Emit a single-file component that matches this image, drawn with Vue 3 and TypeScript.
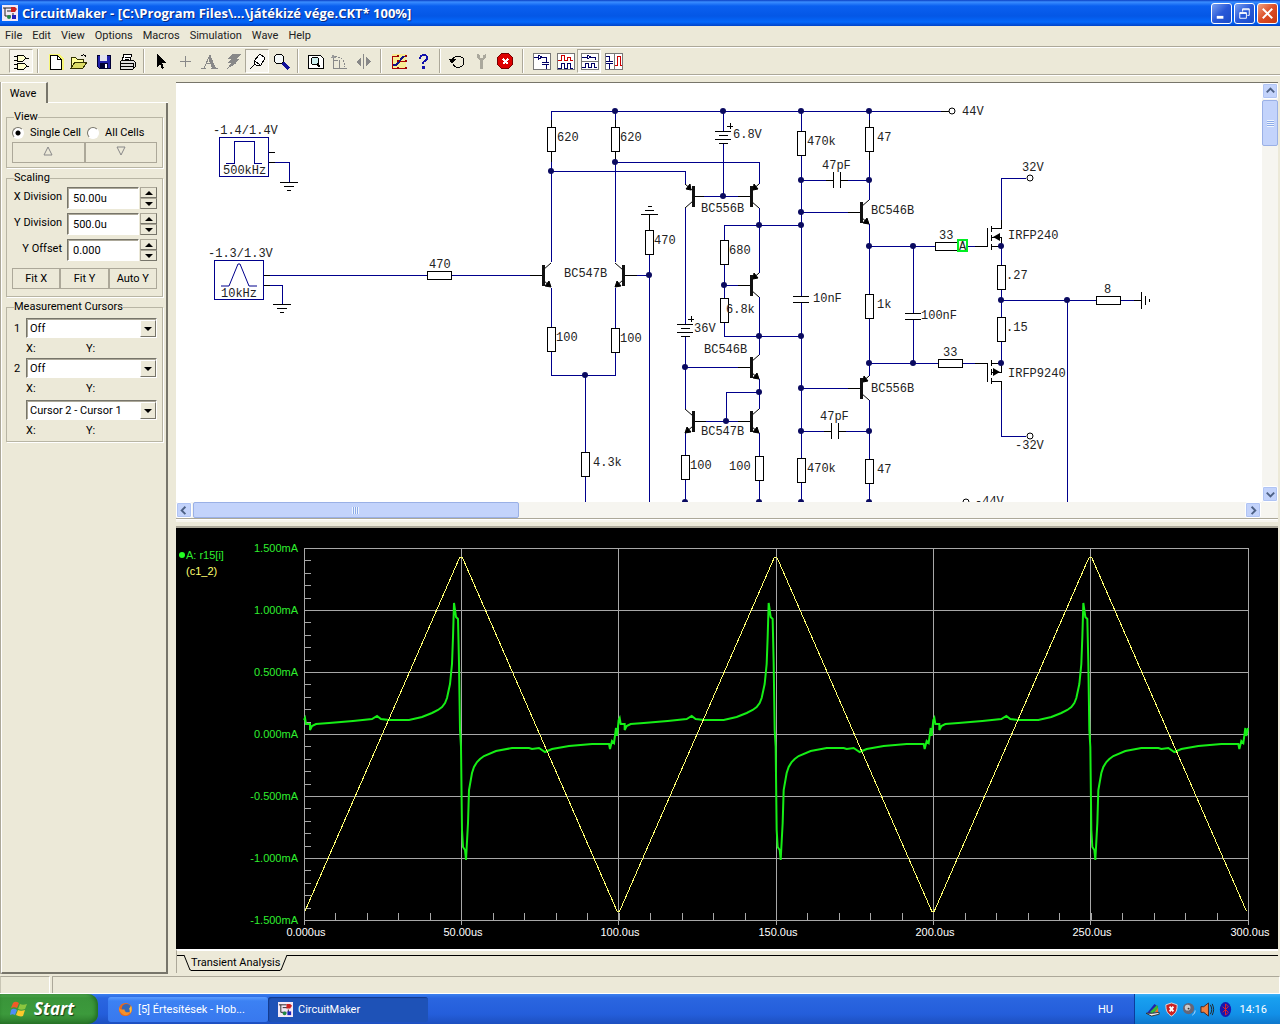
<script setup lang="ts">
import { ref } from 'vue'

type Point = [number, number]

const menus = ['File', 'Edit', 'View', 'Options', 'Macros', 'Simulation', 'Wave', 'Help']

const cellMode = ref('single')
const xDivision = ref('50.00u')
const yDivision = ref('500.0u')
const yOffset = ref('0.000')
const cursor1 = ref('Off')
const cursor2 = ref('Off')
const cursorDiff = ref('Cursor 2 - Cursor 1')

/* Schematic wires, each an SVG path */
const wires: string[] = [
  'M551 127V111H949', 'M615 111V127', 'M723 111V131', 'M801 111V131', 'M869 111V127',
  'M551 151V262', 'M615 151V262', 'M551 171H685V184', 'M615 162H759V184', 'M723 143V196',
  'M264 275H427', 'M451 275H543', 'M269 162H289V182', 'M264 285H282V304',
  'M551 288V327', 'M615 288V328', 'M551 351V375H615V352', 'M585 375V452', 'M585 476V502',
  'M624 275H649', 'M649 254V502', 'M694 196H751', 'M685 208V324', 'M685 336V409',
  'M759 208V273', 'M724 240V225H801', 'M724 264V298', 'M724 285H751', 'M724 322V336H801',
  'M759 297V355', 'M685 367H751', 'M759 379V409', 'M759 392H726V421', 'M694 421H751',
  'M685 433V455', 'M759 433V456', 'M685 479V502', 'M759 480V502',
  'M801 155V296', 'M801 302V458', 'M801 482V502', 'M801 180H833', 'M840 180H869',
  'M801 212H861', 'M869 151V200', 'M869 224V294', 'M869 318V376', 'M869 400V459', 'M869 483V502',
  'M869 246H935', 'M913 246V313', 'M913 319V363', 'M869 363H938', 'M962 363H987',
  'M801 388H861', 'M801 431H831', 'M838 431H869', 'M967 246H987',
  'M1001 228V178H1026', 'M1001 246V265', 'M1001 289V317', 'M1001 341V363', 'M1001 300H1096',
  'M1067 300V502', 'M1120 300H1141', 'M1001 381V436H1026'
]

const leads: string[] = [
  'M615 120V127M551 120V127M551 151V162M615 151V160M869 120V127M869 151V160',
  'M649 214V230M269 152H275M269 162H275M264 275H270M264 285H270',
  'M530 275H543M624 275H637M694 196H704M738 196H751M738 285H751M738 367H751M738 421H751M694 421H706',
  'M848 212H861M848 388H861M826 180H833M840 180H848M824 431H831M838 431H846M975 246H987M975 363H987',
  'M280 182H298M284 186H294M287 190H291M273 304H291M277 308H287M280 312H284',
  'M641 214H658M645 210H654M648 206H652',
  'M715 131H731M719 135H728M715 139H731M719 143H728M727 126H733M730 123V129',
  'M677 324H693M681 328H690M677 332H693M681 336H690M688 319H694M691 316V322',
  'M793 296H809M793 302H809M905 313H921M905 319H921M833 172V188M840 172V188M831 423V439M838 423V439',
  'M1141 292V309M1145 296V305M1149 299V302M1134 300H1141',
  'M987 228V247M991 226V232M991 235V241M991 244V250M991 228H1001V220M991 246H1001V237H992',
  'M987 363V382M991 360V366M991 369V375M991 378V384M991 363H1001V372H991M991 381H1001V390',
  'M941 111H949'
]

const vResistors: Point[] = [
  [551, 127], [615, 127], [801, 131], [869, 127], [649, 230], [724, 240], [724, 298],
  [551, 327], [615, 328], [585, 452], [685, 455], [759, 456], [801, 458], [869, 294],
  [869, 459], [1001, 265], [1001, 317]
]
const hResistors: Point[] = [[427, 275], [935, 246], [938, 363], [1096, 300]]

const nodes: Point[] = [
  [615, 111], [723, 111], [801, 111], [869, 111], [551, 171], [615, 162], [723, 196],
  [649, 275], [585, 375], [759, 225], [801, 225], [724, 285], [759, 336], [801, 336],
  [685, 367], [759, 392], [726, 421], [801, 180], [801, 212], [869, 180], [869, 246],
  [913, 246], [869, 363], [913, 363], [801, 388], [801, 431], [869, 431], [1001, 246],
  [1001, 300], [1001, 363], [1067, 300], [685, 502], [759, 502], [801, 502], [869, 502]
]
const terminals: Point[] = [[952, 111], [1030, 178], [1030, 436], [966, 502]]

interface Transistor { x: number; y: number; dir: 1 | -1; pnp: boolean }
const transistors: Transistor[] = [
  { x: 551, y: 275, dir: 1, pnp: false }, { x: 615, y: 275, dir: -1, pnp: false },
  { x: 685, y: 196, dir: -1, pnp: true }, { x: 759, y: 196, dir: 1, pnp: true },
  { x: 759, y: 285, dir: 1, pnp: true }, { x: 759, y: 367, dir: 1, pnp: false },
  { x: 685, y: 421, dir: -1, pnp: false }, { x: 759, y: 421, dir: 1, pnp: false },
  { x: 869, y: 212, dir: 1, pnp: false }, { x: 869, y: 388, dir: 1, pnp: true }
]
const barX = (t: Transistor) => t.x - 8 * t.dir
const legs = (t: Transistor) =>
  `M${barX(t)} ${t.y - 5}L${t.x} ${t.y - 12}M${barX(t)} ${t.y + 5}L${t.x} ${t.y + 12}`
const arrow = (t: Transistor) => {
  const d = t.dir
  return t.pnp
    ? `M${t.x - 6 * d} ${t.y - 6}l${5 * d} -1l${-4 * d} -5z`
    : `M${t.x} ${t.y + 12}l${-6 * d} -1l${4 * d} -5z`
}

const labels: [number, number, string][] = [
  [213, 134, '-1.4/1.4V'], [223, 174, '500kHz'], [208, 257, '-1.3/1.3V'], [221, 297, '10kHz'],
  [429, 268, '470'], [557, 141, '620'], [620, 141, '620'], [733, 138, '6.8V'], [807, 145, '470k'],
  [877, 141, '47'], [822, 169, '47pF'], [962, 115, '44V'], [701, 212, 'BC556B'], [654, 244, '470'],
  [729, 254, '680'], [726, 313, '6.8k'], [871, 214, 'BC546B'], [939, 239, '33'], [1008, 239, 'IRFP240'],
  [1006, 279, '.27'], [1104, 293, '8'], [1022, 171, '32V'], [813, 302, '10nF'], [877, 308, '1k'],
  [921, 319, '100nF'], [1006, 331, '.15'], [943, 356, '33'], [1008, 377, 'IRFP9240'],
  [871, 392, 'BC556B'], [820, 420, '47pF'], [807, 472, '470k'], [877, 473, '47'],
  [1015, 449, '-32V'], [564, 277, 'BC547B'], [556, 341, '100'], [620, 342, '100'],
  [694, 332, '36V'], [704, 353, 'BC546B'], [701, 435, 'BC547B'], [690, 469, '100'],
  [729, 470, '100'], [593, 466, '4.3k'], [975, 505, '-44V']
]

/* Scope plot */
const left = 304
const top = 548
const width = 944
const height = 372
const yLabels = ['1.500mA', '1.000mA', '0.500mA', '0.000mA', '-0.500mA', '-1.000mA', '-1.500mA']
const xLabels = ['0.000us', '50.00us', '100.0us', '150.0us', '200.0us', '250.0us', '300.0us']
const gridX = (i: number) => left + Math.floor((width / 6) * i)
const gridY = (i: number) => top + 62 * i

const minor = Array.from({ length: 31 }, (_, i) => {
  const y = Math.round(top + 12.4 * i)
  const x = Math.round(left + (width / 30) * i)
  return `M${left} ${y}h7M${x} ${top + height}v-7`
}).join('')

const period = width / 3
const cycle: Point[] = [
  [0, 720], [1, 718], [2, 724], [6, 724], [6, 730], [8, 726], [12, 724], [25, 723], [49, 721],
  [68, 719], [73, 716], [77, 719], [85, 720], [105, 720], [118, 717], [128, 713], [134, 710], [138, 707],
  [141, 703], [143, 698], [146, 684], [148, 664], [149, 637], [150, 603], [152, 617], [154, 619], [155, 663],
  [156, 730], [157, 747], [158, 830], [159, 847], [161, 850], [162, 860], [164, 823], [165, 790],
  [168, 773], [170, 767], [173, 762], [176, 759], [180, 756], [192, 751], [208, 748], [225, 748], [228, 749], [235, 748],
  [241, 752], [248, 749], [265, 746], [288, 744], [305, 744], [306, 749], [308, 741], [310, 743],
  [312, 728], [313, 736]
]
const currentTrace = [0, 1, 2]
  .flatMap(k => cycle.map(([x, y]) => `${left + k * period + x},${y}`))
  .concat(`${left + width},728`)
  .join(' ')
const inputTrace = [0, 1, 2]
  .flatMap(k => {
    const s = left + k * period
    return [`${s + 1},911`, `${s + 155},559`, `${s + 156},557`, `${s + 158},557`, `${s + 159},559`, `${s + 313},911`]
  })
  .join(' ')

interface Tool { name: string; art: string; pressed?: boolean }
const toolGroups: { wide?: boolean; tools: Tool[] }[] = [
  { tools: [{ name: 'Parts', pressed: true, art: '<path d="M6 4h6l3 3-3 3H6zM6 12h7l3 3-3 3H6z" fill="#ffc" stroke="#000"/><path d="M3 5h3M3 9h3M15 7h3M3 13h3M3 17h3M16 15h2" stroke="#000"/>' }] },
  { tools: [
    { name: 'New', art: '<path d="M4 3h11l4 5v11H4z" fill="#ff3" opacity=".6"/><path d="M5 4h7l4 4v10H5z" fill="#fff" stroke="#000"/><path d="M12 4v4h4" stroke="#000"/>' },
    { name: 'Open', art: '<path d="M2 17V6h4l2 2h6v3" fill="#ff9" stroke="#330"/><path d="M2 17l4-6h12l-4 6z" fill="#dd6" stroke="#330"/><path d="M12 5c2-2 4-1 5 1" stroke="#000"/>' },
    { name: 'Save', art: '<path d="M4 4h13v13H6l-2-2z" fill="#22a" stroke="#003"/><path d="M7 4h7v6H7z" fill="#e4e4ee"/><path d="M7 12h8v5H7z" fill="#003"/><path d="M12 13h2v4h-2z" fill="#fff"/>' },
    { name: 'Print', art: '<path d="M5 10l2-7h8l-2 7" fill="#fff" stroke="#000"/><path d="M8 6h5M8 8h4" stroke="#000"/><path d="M3 11l2-2h11l2 2v5l-2 2H3z" fill="#ddd" stroke="#000"/><path d="M3 12h13v6M3 15h13" stroke="#000"/>' }
  ] },
  { tools: [
    { name: 'Select', art: '<path d="M6 3v13l3-3 2 5 2-1-2-5h4z" fill="#000"/>' },
    { name: 'Wire', art: '<path d="M10 5v11M5 10h11" stroke="#888"/>' },
    { name: 'Text', art: '<path d="M2 17h5M12 17h7M5 17L11 4l5 13M7 12h7" stroke="#888"/><path d="M11 4l6 13h-4L9 7z" fill="#888"/>' },
    { name: 'Delete', art: '<path d="M9 3h9l-4 5h3l-5 4h2L4 18l4-6H5l3-4H5z" fill="#888"/>' },
    { name: 'Probe', pressed: true, art: '<path d="M3 18l5-5-1-3 6-7 5 4-4 7-4 1-2-2" fill="#fff" stroke="#000"/><path d="M8 10l5 4" stroke="#000"/>' },
    { name: 'Zoom', art: '<circle cx="8" cy="8" r="5" fill="#f4f8f8" stroke="#000"/><path d="M12 12l6 6" stroke="#119" stroke-width="3"/>' }
  ] },
  { tools: [
    { name: 'Fit', art: '<path d="M3 4h12l3 3v10H3z" fill="#fff" stroke="#000"/><circle cx="10" cy="10" r="4" fill="#cee" stroke="#000"/><path d="M12 13l3 3" stroke="#000" stroke-width="2"/>' },
    { name: 'Rotate', art: '<path d="M4 4v13h14M4 9h5M10 9v8" stroke="#888"/><path d="M6 6c6-1 10 3 10 10" stroke="#888" stroke-dasharray="2 1"/><path d="M2 7l2-4 3 4z" fill="#999"/>' },
    { name: 'Mirror', art: '<path d="M10 3v15" stroke="#888"/><path d="M8 6v9l-5-4zM13 6v9l5-4z" fill="#888"/>' }
  ] },
  { wide: true, tools: [
    { name: 'Options', art: '<path d="M3 3h14v15H3z" fill="#fe6" opacity=".6"/><path d="M8 5H3v12h14M9 10h8M13 5h5" stroke="#a00"/><path d="M4 14h3l8-9" stroke="#118" stroke-width="2"/><path d="M8 4h2v2H8zM16 4h2v2h-2zM8 9h2v2H8zM16 9h2v2h-2zM8 16h2v2H8zM16 16h2v2h-2z" fill="#900"/>' },
    { name: 'Help', art: '<path d="M7 8c0-5 8-5 7-1 0 3-4 2-4 6" stroke="#11a" stroke-width="2"/><path d="M9 15h3v3H9z" fill="#11a"/>' }
  ] },
  { tools: [
    { name: 'Reset', art: '<path d="M5 9c3-6 13-4 12 2 0 6-9 7-11 2" stroke="#000"/><path d="M2 8h7l-4 5z" fill="#000"/>' },
    { name: 'Setup', art: '<path d="M6 3v4l3 2v9h3V9l3-2V3l-3 1v3H9V4z" fill="#aaa89c"/>' },
    { name: 'Stop', art: '<circle cx="10" cy="10" r="8" fill="#d00" stroke="#700"/><path d="M8 8l5 5M13 8l-5 5" stroke="#fff" stroke-width="2"/>' }
  ] },
  { wide: true, tools: [
    { name: 'Schematic view', art: '<path d="M2 2h17v16H2z" fill="#fff" stroke="#777"/><path d="M3 6h4M7 4v5l4-3zM11 6h4v5M11 11h7M11 13h7M15 13v5" stroke="#006"/>' },
    { name: 'Digital waves', art: '<path d="M2 2h17v16H2z" fill="#fff" stroke="#777"/><path d="M3 9h3V4h3v5h3V6h3v3h3" stroke="#c00"/><path d="M3 17h3v-5h3v5h3v-5h3v5h3" stroke="#006"/>' },
    { name: 'Schematic and waves', pressed: true, art: '<path d="M2 2h17v16H2zM2 10h17" fill="#fff" stroke="#777"/><path d="M3 6h5M8 4v4l4-2zM12 6h4v3M3 16h3v-4h3v4h3v-4h3v4h3" stroke="#006"/>' },
    { name: 'Side by side', art: '<path d="M2 2h17v16H2zM11 2v16" fill="#fff" stroke="#777"/><path d="M3 5h3v5M3 10h7M3 12h7M6 12v6" stroke="#006"/><path d="M12 14h2V5h3v9h2" stroke="#c00"/>' }
  ] }
]

const appArt = '<path d="M0 0h16v16H0z" fill="#f3e8f6"/><path d="M1 3h8M3 3v8h6M5 6h5M11 8v3" stroke="#222" fill="none"/><path d="M9 2h4l2 2-2 3H9z" fill="#c22"/><circle cx="7" cy="12" r="2" fill="#284"/><path d="M10 10h4v4h-4z" fill="#22b"/>'
</script>

<template>
  <div class="window">
    <header class="title">
      <svg class="app-icon" viewBox="0 0 16 16" v-html="appArt"></svg>
      <h1>CircuitMaker - [C:\Program Files\...\játékizé vége.CKT* 100%]</h1>
      <button class="win-btn" aria-label="Minimize"><svg viewBox="0 0 20 20"><path d="M5 14h7" stroke="#fff" stroke-width="3" /></svg></button>
      <button class="win-btn" aria-label="Restore"><svg viewBox="0 0 20 20" fill="none" stroke="#fff"><path d="M5 9h7v6H5zM5 10h7M8 8V5h7v7h-2M8 6h7" /></svg></button>
      <button class="win-btn close" aria-label="Close"><svg viewBox="0 0 20 20"><path d="M5 5l10 10M15 5L5 15" stroke="#fff" stroke-width="2" /></svg></button>
    </header>

    <nav class="menu">
      <button v-for="m in menus" :key="m">{{ m }}</button>
    </nav>

    <div class="toolbar">
      <template v-for="(g, i) in toolGroups" :key="i">
        <span v-if="i" class="sep" :class="{ wide: g.wide }"></span>
        <button v-for="t in g.tools" :key="t.name" :class="{ pressed: t.pressed }" :aria-label="t.name">
          <svg viewBox="0 0 21 21" v-html="t.art"></svg>
        </button>
      </template>
    </div>

    <main class="work">
      <aside class="side">
        <div class="side-tab"><button>Wave</button></div>
        <div class="side-body">
          <fieldset class="view-box">
            <legend>View</legend>
            <div class="radios">
              <label><input v-model="cellMode" type="radio" value="single">Single Cell</label>
              <label><input v-model="cellMode" type="radio" value="all">All Cells</label>
            </div>
            <div class="btn-row">
              <button aria-label="Previous cell"><svg width="12" height="10" viewBox="0 0 12 10"><path d="M6 1l4 8H2z" fill="none" stroke="#888" /></svg></button>
              <button aria-label="Next cell"><svg width="12" height="10" viewBox="0 0 12 10"><path d="M6 9l4-8H2z" fill="none" stroke="#888" /></svg></button>
            </div>
          </fieldset>

          <fieldset class="scale-box">
            <legend>Scaling</legend>
            <div class="field">
              <label for="xdiv">X Division</label><input id="xdiv" v-model="xDivision" type="text">
              <span class="spin"><button aria-label="X up"><i class="up"></i></button><button aria-label="X down"><i class="down"></i></button></span>
            </div>
            <div class="field">
              <label for="ydiv">Y Division</label><input id="ydiv" v-model="yDivision" type="text">
              <span class="spin"><button aria-label="Y up"><i class="up"></i></button><button aria-label="Y down"><i class="down"></i></button></span>
            </div>
            <div class="field">
              <label for="yoff">Y Offset</label><input id="yoff" v-model="yOffset" type="text">
              <span class="spin"><button aria-label="Offset up"><i class="up"></i></button><button aria-label="Offset down"><i class="down"></i></button></span>
            </div>
            <div class="btn-row"><button>Fit X</button><button>Fit Y</button><button>Auto Y</button></div>
          </fieldset>

          <fieldset class="cursor-box">
            <legend>Measurement Cursors</legend>
            <div class="pick">
              <label for="c1">1</label>
              <span class="combo"><select id="c1" v-model="cursor1"><option>Off</option></select><i><b class="down"></b></i></span>
            </div>
            <div class="xy"><span>X:</span><span>Y:</span></div>
            <div class="pick">
              <label for="c2">2</label>
              <span class="combo"><select id="c2" v-model="cursor2"><option>Off</option></select><i><b class="down"></b></i></span>
            </div>
            <div class="xy"><span>X:</span><span>Y:</span></div>
            <div class="pick last">
              <label for="c3"></label>
              <span class="combo"><select id="c3" v-model="cursorDiff" aria-label="Cursor difference"><option>Cursor 2 - Cursor 1</option></select><i><b class="down"></b></i></span>
            </div>
            <div class="xy"><span>X:</span><span>Y:</span></div>
          </fieldset>
        </div>
      </aside>

      <section class="docs">
        <div class="sheet">
          <svg class="schematic" viewBox="176 83 1086 419">
            <g class="crisp">
              <path v-for="w in wires" :key="w" :d="w" stroke="#00008c" />
              <path v-for="l in leads" :key="l" :d="l" stroke="#000" />
              <path d="M219 137h49v39h-49zM226 163h8v-22h20v22h8M214 260h49v39h-49z" stroke="#00008c" />
              <rect v-for="(r, i) in vResistors" :key="'v' + i" :x="r[0] - 4" :y="r[1]" width="8" height="24" fill="#fff" stroke="#000" />
              <rect v-for="(r, i) in hResistors" :key="'h' + i" :x="r[0]" :y="r[1] - 4" width="24" height="8" fill="#fff" stroke="#000" />
            </g>
            <path d="M221 286h8l9-22h2l9 22h8" fill="none" stroke="#00008c" />
            <g v-for="(t, i) in transistors" :key="'t' + i">
              <path :d="legs(t)" stroke="#000" fill="none" />
              <path :d="arrow(t)" fill="#000" stroke="#000" />
              <rect :x="barX(t) - 1" :y="t.y - 10" width="3" height="21" fill="#111" />
            </g>
            <path d="M993 237l7-4v8zM1000 372l-7-4v8z" fill="#000" />
            <circle v-for="(n, i) in nodes" :key="'n' + i" :cx="n[0]" :cy="n[1]" r="3" fill="#0a0a60" />
            <circle v-for="(n, i) in terminals" :key="'c' + i" :cx="n[0]" :cy="n[1]" r="3" fill="#fff" stroke="#000" />
            <rect x="958" y="240" width="9" height="11" fill="#efe" stroke="#0e2" stroke-width="2" />
            <text x="959" y="250">A</text>
            <text v-for="(l, i) in labels" :key="'l' + i" :x="l[0]" :y="l[1]">{{ l[2] }}</text>
          </svg>
          <div class="vscroll">
            <button aria-label="Scroll up"><svg viewBox="0 0 15 15"><path d="M4 9l4-4 4 4" /></svg></button>
            <div class="thumb"><i></i></div>
            <button class="end" aria-label="Scroll down"><svg viewBox="0 0 15 15"><path d="M4 6l4 4 4-4" /></svg></button>
          </div>
        </div>
        <div class="hscroll">
          <button aria-label="Scroll left"><svg viewBox="0 0 15 15"><path d="M9 4L5 8l4 4" /></svg></button>
          <div class="thumb"><i></i></div>
          <button class="end" aria-label="Scroll right"><svg viewBox="0 0 15 15"><path d="M6 4l4 4-4 4" /></svg></button>
        </div>
        <div class="splitter"></div>

        <div class="scope">
          <svg viewBox="176 528 1102 421">
            <g class="crisp" stroke="#a8a8a8">
              <path :d="minor" />
              <path v-for="i in 7" :key="'y' + i" :d="`M${left} ${gridY(i - 1)}H${left + width}`" />
              <path v-for="i in 7" :key="'x' + i" :d="`M${gridX(i - 1)} ${top}V${top + height + 5}`" />
            </g>
            <polyline :points="currentTrace" fill="none" stroke="#16ee16" stroke-width="2" />
            <polyline class="crisp" :points="inputTrace" stroke="#ffff70" />
            <circle cx="182" cy="555" r="3" fill="#2f2" />
            <text x="186" y="559" class="green">A: r15[i]</text>
            <text x="186" y="575" class="yellow">(c1_2)</text>
            <text v-for="(l, i) in yLabels" :key="l" x="298" :y="gridY(i) + 4" class="green" text-anchor="end">{{ l }}</text>
            <text v-for="(l, i) in xLabels" :key="l" :x="gridX(i) + 2" y="936" class="white" text-anchor="middle">{{ l }}</text>
          </svg>
        </div>

        <div class="sheet-tabs">
          <span class="lead"></span>
          <svg width="7" height="16" viewBox="0 0 7 16"><path d="M0 0l6 15h1" /></svg>
          <button>Transient Analysis</button>
          <svg width="7" height="16" viewBox="0 0 7 16"><path d="M0 15h1L7 0" /></svg>
          <span class="rest"></span>
        </div>
      </section>
    </main>

    <div class="status"><span></span><span></span></div>

    <footer class="taskbar">
      <button class="start">
        <svg viewBox="0 0 18 18"><path d="M3 3c2-2 4-1 6 0L7 8C5 7 3 7 1 8z" fill="#f05a28" /><path d="M10 4c2 1 4 1 7 0l-2 5c-2 1-5 1-7 0z" fill="#8cc63f" /><path d="M1 10c2-2 4-1 6 0l-2 5c-2-1-3-1-5 0z" fill="#4f8df5" /><path d="M8 10c2 1 4 1 7 0l-2 6c-2 1-5 0-7-1z" fill="#fbc92c" /></svg>
        <span>Start</span>
      </button>
      <button class="task">
        <svg viewBox="0 0 16 16"><circle cx="8" cy="8" r="7" fill="#e8681c" /><circle cx="9" cy="7" r="5" fill="#3468b8" /><path d="M1 5c1 4 4 3 6 3 0 3 3 4 6 2-1 4-5 5-8 3S1 9 1 5z" fill="#f6902a" /><path d="M14 4c1 3 1 6-1 8l-1-5z" fill="#fbbf3a" /></svg>
        <span>[5] Értesítések - Hob...</span>
      </button>
      <button class="task active">
        <svg viewBox="0 0 16 16" v-html="appArt"></svg>
        <span>CircuitMaker</span>
      </button>
      <span class="lang">HU</span>
      <div class="tray">
        <svg viewBox="0 0 16 16"><path d="M1 12L9 2l4 3-6 8z" fill="#22a" /><path d="M4 11l8-8 1 4-6 5z" fill="#3b3" /><path d="M9 11l4-5v5z" fill="#e62" /><path d="M0 12l7 0 7-1v2l-8 2z" fill="#eee" stroke="#333" /></svg>
        <svg viewBox="0 0 16 16"><path d="M8 1l6 2c0 6-1 9-6 12C3 12 2 9 2 3z" fill="#c22" stroke="#ddd" /><path d="M6 5l4 5M10 5l-4 5" stroke="#fff" stroke-width="2" /></svg>
        <svg viewBox="0 0 16 16"><circle cx="7" cy="7" r="6" fill="#667" /><circle cx="6" cy="6" r="3" fill="#ccc" /><circle cx="7" cy="7" r="1" fill="#333" /><path d="M11 14c2-1 3-3 3-5" stroke="#bdf" fill="none" /></svg>
        <svg viewBox="0 0 16 16"><path d="M1 5h3l5-4v14l-5-4H1z" fill="#f08040" stroke="#422" /><path d="M11 3c2 3 2 7 0 10M13 2c2 4 2 8 0 12" stroke="#222" fill="none" /></svg>
        <svg viewBox="0 0 16 16"><ellipse cx="8" cy="8" rx="6" ry="8" fill="#1818b0" /><path d="M5 5l6 6-3 3V2l3 3-6 6" stroke="#e22" stroke-width="1" fill="none" /></svg>
        <time>14:16</time>
      </div>
    </footer>
  </div>
</template>

<style>
body { margin: 0; background: #ece9d8; }
</style>

<style scoped>
* { box-sizing: border-box; }
button { font: inherit; color: inherit; padding: 0; border: 0; background: none; white-space: nowrap; }
.window { min-height: 100vh; display: flex; flex-direction: column; background: #ece9d8; font: 11px/13px Roboto, "Liberation Sans", sans-serif; color: #000; }
.crisp { shape-rendering: crispEdges; fill: none; }

.title { height: 26px; display: flex; align-items: center; gap: 2px; padding: 0 2px; background: linear-gradient(#0a3fc4, #3a8dff 2px, #0a60f0 6px, #0457e6 16px, #0468fb 22px, #0043c8 26px); }
.title h1 { flex: 1; margin: 0 0 0 2px; font: 700 13px/18px "Open Sans", "Noto Sans", sans-serif; color: #fff; text-shadow: 1px 1px 0 #0a2a80; white-space: nowrap; }
.app-icon { width: 16px; height: 16px; }
.win-btn { width: 21px; height: 21px; border: 1px solid #fff; border-radius: 3px; background: linear-gradient(135deg, #7aa0f0, #2858d8 50%, #1a4cc8); }
.win-btn svg { display: block; width: 19px; height: 19px; }
.win-btn.close { background: linear-gradient(135deg, #f0a080, #dc4c24 50%, #c83810); }

.menu { height: 21px; display: flex; align-items: center; gap: 10px; padding: 0 5px 1px; border-bottom: 1px solid #aca899; color: #222; }
.toolbar { height: 28px; display: flex; align-items: center; padding-left: 9px; border-top: 1px solid #fff; border-bottom: 1px solid #aca899; }
.toolbar button { width: 24px; height: 24px; display: flex; align-items: center; justify-content: center; border: 1px solid transparent; }
.toolbar button.pressed { border-color: #aca899 #fff #fff #aca899; background: #f6f4ec; }
.toolbar svg { width: 21px; height: 21px; fill: none; shape-rendering: crispEdges; }
.sep { width: 2px; height: 24px; margin: 0 4px; border-left: 1px solid #aca899; border-right: 1px solid #fff; }
.sep.wide { margin: 0 5px; }

.work { flex: 1; display: flex; border-top: 1px solid #fff; padding-top: 6px; }
.side { width: 168px; display: flex; flex-direction: column; margin-bottom: 2px; border-left: 1px solid #aca899; }
.side-tab { height: 21px; display: flex; }
.side-tab button { width: 47px; padding: 1px 2px 0 0; border-right: 2px solid #77756a; border-left: 1px solid #fff; border-top: 1px solid #fff; }
.side-tab::after { content: ""; flex: 1; border-bottom: 1px solid #fff; }
.side-body { flex: 1; padding: 8px 4px 0 4px; border-right: 2px solid #77756a; border-bottom: 2px solid #77756a; border-left: 1px solid #fff; }
fieldset { width: 157px; margin: 0 0 4px; padding: 0 5px; border: 1px solid #b8b5a4; box-shadow: 1px 1px 0 #fff; }
legend { margin-left: 2px; padding: 0; line-height: 12px; }
.view-box { height: 57px; }
.scale-box { height: 125px; padding-top: 3px; }
.cursor-box { height: 141px; padding-top: 5px; }
.radios { height: 19px; display: flex; align-items: center; gap: 6px; }
.radios label { display: flex; align-items: center; gap: 6px; white-space: nowrap; }
.radios input { appearance: none; width: 12px; height: 12px; margin: 0; border: 1px solid; border-color: #77756a #fff #fff #77756a; border-radius: 6px; background: #fff; }
.radios input:checked { background: radial-gradient(circle, #000 2px, #fff 3px); }
.btn-row { display: flex; }
.btn-row button { flex: 1; height: 21px; border: 1px solid; border-color: #fff #77756a #77756a #fff; outline: 1px solid #aca899; outline-offset: -1px; }
.field { height: 22px; display: flex; align-items: center; margin-bottom: 4px; }
.field label { width: 50px; padding-bottom: 3px; text-align: right; white-space: nowrap; }
.field input { width: 72px; height: 22px; margin: 0 1px 0 5px; padding: 0 5px; border: 1px solid; border-color: #77756a #fff #fff #77756a; box-shadow: inset 1px 1px 0 #aca899; background: #fff; font: inherit; }
.field + .btn-row { margin-top: 7px; }
.spin { width: 17px; height: 22px; display: flex; flex-direction: column; }
.spin button { flex: 1; display: flex; align-items: center; justify-content: center; border: 1px solid; border-color: #aca899 #77756a #77756a #aca899; }
.up, .down { width: 0; height: 0; border: 4px solid transparent; }
.up { border-top: 0; border-bottom-color: #000; }
.down { border-bottom: 0; border-top-color: #000; }
.pick { display: flex; align-items: center; height: 20px; }
.pick.last { margin-top: 2px; }
.pick label { width: 14px; padding-left: 2px; }
.combo { position: relative; flex: 1; height: 20px; }
.combo select { appearance: none; width: 100%; height: 20px; padding: 0 3px; border: 1px solid; border-color: #77756a #fff #fff #77756a; border-radius: 0; box-shadow: inset 1px 1px 0 #aca899; background: #fff; color: #000; font: inherit; }
.combo i { position: absolute; right: 1px; top: 2px; width: 16px; height: 17px; display: flex; align-items: center; justify-content: center; background: #ece9d8; border: 1px solid; border-color: #fff #77756a #77756a #fff; pointer-events: none; }
.xy { display: flex; height: 20px; align-items: center; padding-left: 14px; }
.xy span { width: 60px; }

.docs { flex: 1; min-width: 0; display: flex; flex-direction: column; margin: 0 2px 0 8px; border-top: 1px solid #77756a; }
.sheet { display: flex; background: #fff; }
.schematic { flex: 1; min-width: 0; height: 419px; display: block; }
.schematic text { font: 12px "Liberation Mono", monospace; fill: #222; }
.vscroll { width: 16px; display: flex; flex-direction: column; background: #f6f5f0; }
.hscroll { height: 17px; display: flex; background: #f6f5f0; padding-right: 17px; border-bottom: 1px solid #aca899; }
.vscroll button, .hscroll button { width: 16px; height: 16px; border: 1px solid #fff; border-radius: 2px; background: #c3d3fb; box-shadow: inset 0 0 0 1px #b0c4f4; }
.vscroll svg, .hscroll svg { display: block; width: 14px; height: 14px; fill: none; stroke: #4d6185; stroke-width: 2; }
.thumb { display: flex; align-items: center; justify-content: center; background: #c3d3fb; border: 1px solid #9ab0e6; border-radius: 2px; }
.vscroll .thumb { height: 46px; margin-top: 1px; }
.vscroll .thumb i { width: 7px; height: 7px; background: repeating-linear-gradient(#eef4fe 0 1px, #8caae8 1px 2px); }
.hscroll .thumb { width: 30%; margin-left: 1px; }
.hscroll .thumb i { width: 7px; height: 7px; background: repeating-linear-gradient(90deg, #eef4fe 0 1px, #8caae8 1px 2px); }
.vscroll .end { margin-top: auto; }
.hscroll .end { margin-left: auto; }
.splitter { height: 9px; border-top: 1px solid #fff; border-bottom: 2px solid #aca899; box-shadow: inset 0 2px 0 #f6f4ec; }

.scope { background: #000; }
.scope svg { display: block; width: 100%; height: 421px; }
.scope text { font: 11px "Liberation Sans", Arial, sans-serif; }
.green { fill: #2fee2f; }
.yellow { fill: #ffff70; }
.white { fill: #fff; }

.sheet-tabs { display: flex; height: 24px; padding-top: 4px; border-top: 2px solid #fff; border-left: 1px solid #aca899; }
.sheet-tabs svg { height: 16px; fill: none; stroke: #000; }
.sheet-tabs button { height: 16px; border-bottom: 1px solid #000; line-height: 15px; }
.lead { width: 7px; border-top: 1px solid #000; }
.rest { flex: 1; border-top: 1px solid #000; }

.status { height: 18px; display: flex; gap: 2px; border-bottom: 1px solid #fff; }
.status span { width: 50px; border-top: 1px solid #aca899; border-right: 1px solid #fff; border-left: 1px solid #c8c5b4; }
.status span + span { flex: 1; border-left-color: #aca899; }

.taskbar { height: 30px; display: flex; align-items: stretch; color: #fff; background: linear-gradient(#3a80f0, #2a66e0 4px, #245edb 20px, #1d4fc0); }
.start { width: 98px; display: flex; align-items: center; gap: 6px; padding: 0 0 0 10px; border-radius: 0 10px 10px 0; background: linear-gradient(#5cb85c, #3a953a 4px, #3c9a3c 20px, #2c7a2c); box-shadow: inset -2px 0 4px #1f6a1f; }
.start svg { width: 18px; height: 18px; }
.start span { font: italic 700 17px/20px "Open Sans", "Noto Sans", sans-serif; text-shadow: 1px 1px 1px #174017; }
.task { width: 160px; height: 25px; align-self: center; display: flex; align-items: center; gap: 5px; padding-left: 10px; border-radius: 3px; background: linear-gradient(#5a9bff, #3c81f3 4px, #3878ee); }
.start + .task { margin-left: 10px; }
.task svg { width: 15px; height: 15px; }
.task.active { background: #1e52b7; box-shadow: inset 1px 1px 1px #123a8c; }
.lang { margin: auto 21px auto auto; }
.tray { width: 146px; display: flex; align-items: center; gap: 3px; padding-left: 11px; border-left: 1px solid #0c3c9c; background: linear-gradient(#3cb0f8, #18a0f0 4px, #1290e8 20px, #0f78cc); }
.tray svg { width: 15px; height: 15px; }
.tray time { margin-left: auto; padding-right: 13px; }
</style>
